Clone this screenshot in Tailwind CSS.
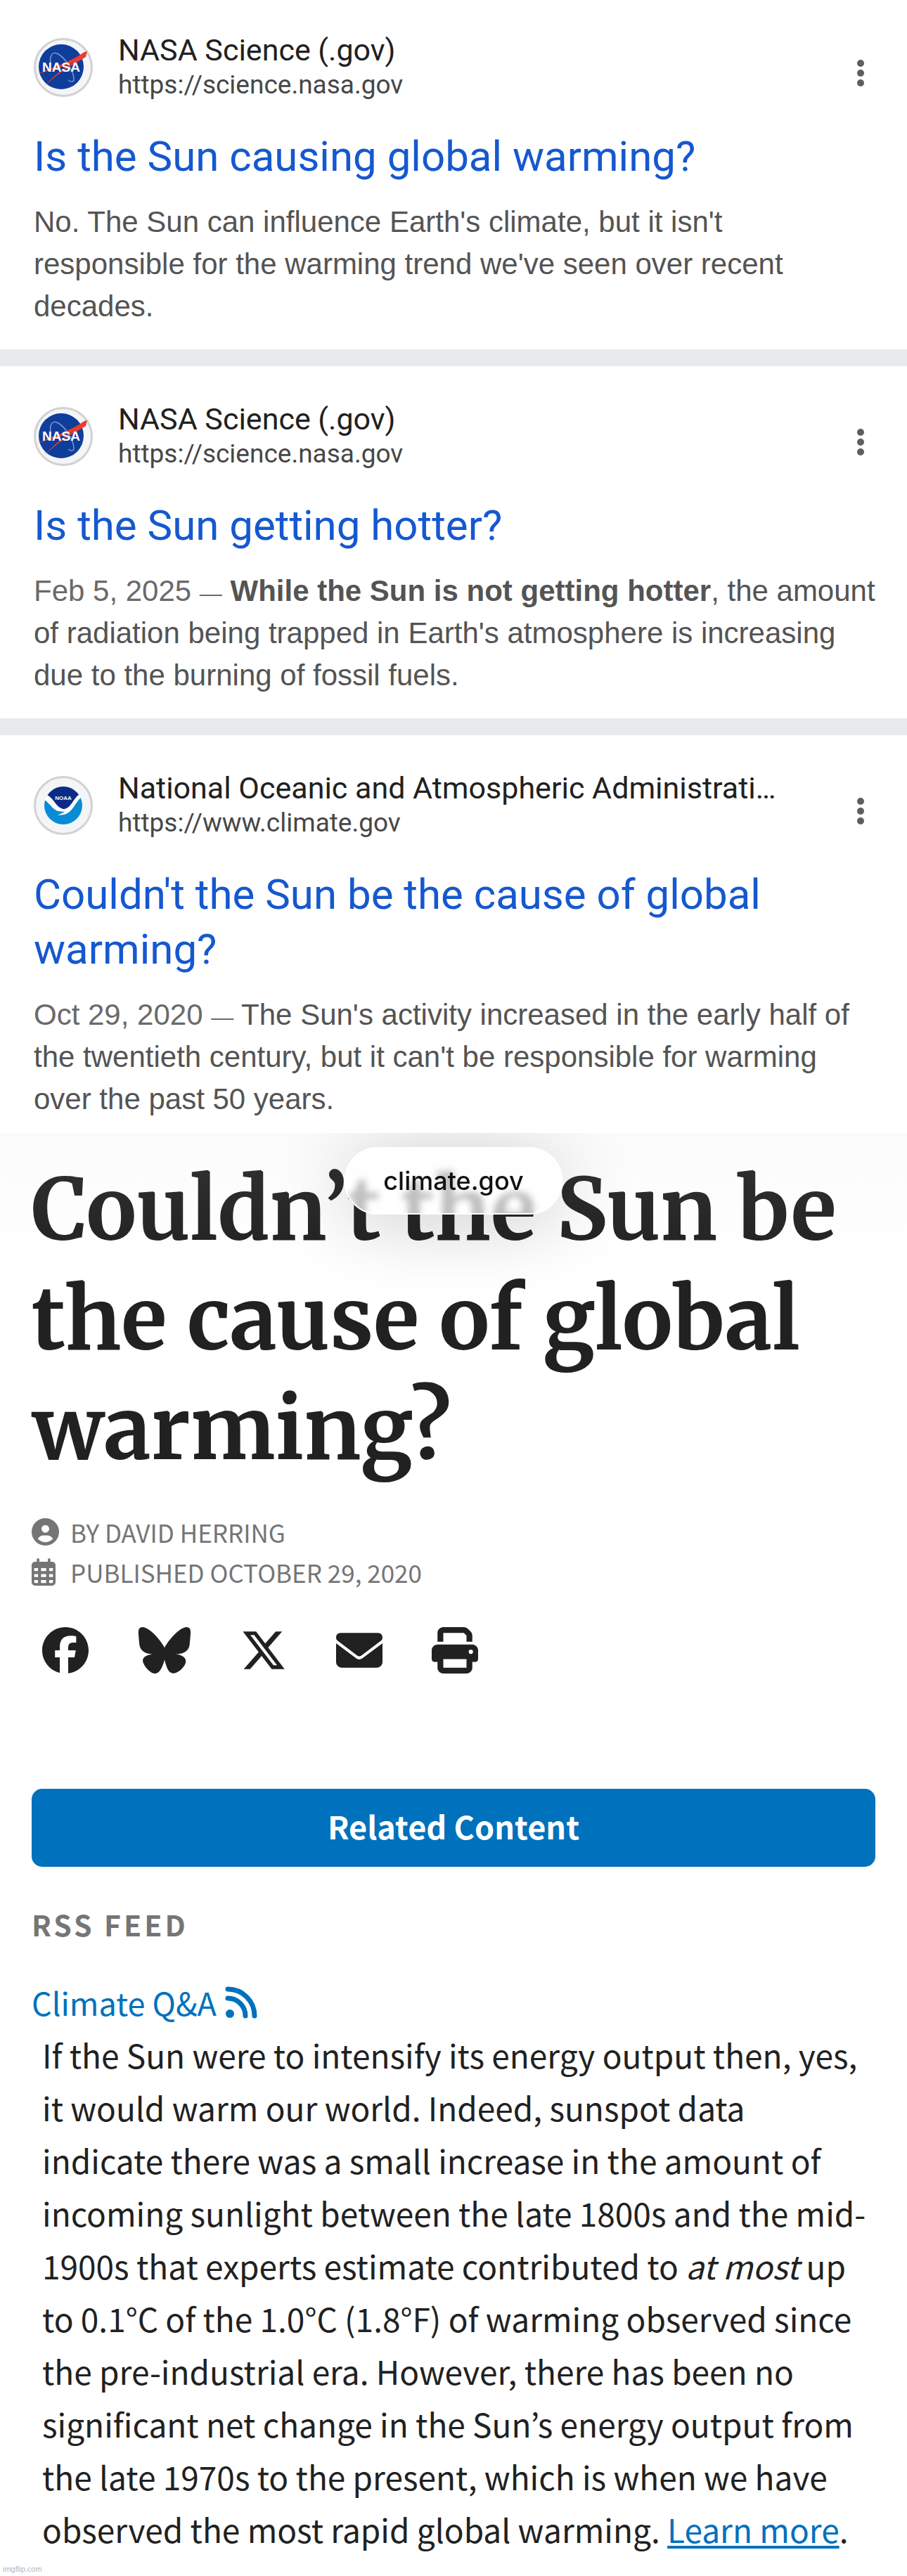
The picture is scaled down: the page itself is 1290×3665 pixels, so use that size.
<!DOCTYPE html>
<html lang="en">
<head>
  <meta charset="UTF-8" />
  <meta name="viewport" content="width=device-width, initial-scale=1.0"/>
  <title>Couldn’t the Sun be the cause of global warming?</title>
  <script src="https://cdn.jsdelivr.net/npm/@tailwindcss/browser@4"></script>
</head>
<body class="relative bg-white font-['Noto_Sans_CJK_JP','Noto_Sans',sans-serif] text-[#212121]">

  <!-- Shared icons -->
  <svg class="hidden" aria-hidden="true">
    <symbol id="nasa" viewBox="0 0 84 84">
      <circle cx="42" cy="42" r="40.5" fill="#f3f5f9" stroke="#d2d2d2" stroke-width="3"/>
      <circle cx="39" cy="41" r="32" fill="#0f3d9b"/>
      <path d="M24 38c-2-14 3-20 11-15 10 6 22 24 22 36 0 4-4 4-8 1" fill="none" stroke="#7d97cf" stroke-width="1.5"/>
      <path d="M4 52C24 42 50 36 72 20l4-1-2 8C56 38 34 50 15 69c14-16 28-26 42-34C40 42 22 46 4 52z" fill="#ee3b2c"/>
      <text x="39" y="48" text-anchor="middle" font-family="Liberation Sans, sans-serif" font-weight="700" font-size="19" fill="#fff">NASA</text>
    </symbol>
    <symbol id="dots" viewBox="0 0 12 40">
      <circle cx="6" cy="6" r="5"/><circle cx="6" cy="20" r="5"/><circle cx="6" cy="34" r="5"/>
    </symbol>
  </svg>

  <!-- Search results -->
  <section class="font-[Roboto,sans-serif]">
    <article class="pl-12 pr-10 pt-[46px] pb-[31px] border-b-[24px] border-[#e8eaed]">
      <div class="flex items-center">
        <svg class="size-[84px] shrink-0"><use href="#nasa"/></svg>
        <div class="ml-9 flex-1 min-w-0">
          <p class="text-[43px] leading-[50px] truncate">NASA Science (.gov)</p>
          <p class="text-[37px] leading-[50px] text-[#474747]">https://science.nasa.gov</p>
        </div>
        <button type="button" aria-label="More options" class="mt-4 ml-[100px] mr-5"><svg class="w-3 h-10 fill-[#5e5e5e]"><use href="#dots"/></svg></button>
      </div>
      <h3 class="mt-[38px] text-[60px] leading-[78px] text-[#1558d0]"><a href="#">Is the Sun causing global warming?</a></h3>
      <p class="mt-6 font-['Liberation_Sans',sans-serif] text-[42px] leading-[60px] text-[#545454]">No. The Sun can influence Earth's climate, but it isn't responsible for the warming trend we've seen over recent decades.</p>
    </article>

    <article class="pl-12 pr-10 pt-[50px] pb-[31px] border-b-[24px] border-[#e8eaed]">
      <div class="flex items-center">
        <svg class="size-[84px] shrink-0"><use href="#nasa"/></svg>
        <div class="ml-9 flex-1 min-w-0">
          <p class="text-[43px] leading-[50px] truncate">NASA Science (.gov)</p>
          <p class="text-[37px] leading-[50px] text-[#474747]">https://science.nasa.gov</p>
        </div>
        <button type="button" aria-label="More options" class="mt-4 ml-[100px] mr-5"><svg class="w-3 h-10 fill-[#5e5e5e]"><use href="#dots"/></svg></button>
      </div>
      <h3 class="mt-[38px] text-[60px] leading-[78px] text-[#1558d0]"><a href="#">Is the Sun getting hotter?</a></h3>
      <p class="mt-6 font-['Liberation_Sans',sans-serif] text-[42px] leading-[60px] text-[#545454]"><span class="text-[#6a6a6a]">Feb 5, 2025 <span class="text-[32px] leading-none">—</span> </span><b>While the Sun is not getting hotter</b>, the amount of radiation being trapped in Earth's atmosphere is increasing due to the burning of fossil fuels.</p>
    </article>

    <article class="pl-12 pr-10 pt-[50px] pb-[18px]">
      <div class="flex items-center">
        <svg class="size-[84px] shrink-0" viewBox="0 0 84 84">
          <clipPath id="seal"><circle cx="42" cy="42" r="27"/></clipPath>
          <circle cx="42" cy="42" r="40.5" fill="#f3f5f7" stroke="#d2d2d2" stroke-width="3"/>
          <g clip-path="url(#seal)">
            <path d="M10 10h64v64H10z" fill="#fff"/>
            <path d="M14 10h56v17l-5-1C56 32 53 46 43 47 32 46 30 33 19 27l-5 0z" fill="#0b2c86"/>
            <path d="M12 33c9 2 13 14 22 17l10 1-10 5 9-1C56 52 58 38 70 28v46H12z" fill="#0a8bd6"/>
          </g>
          <text x="42" y="34" text-anchor="middle" font-family="Liberation Sans, sans-serif" font-weight="700" font-size="8" fill="#fff">NOAA</text>
        </svg>
        <div class="ml-9 flex-1 min-w-0">
          <p class="text-[43px] leading-[50px] truncate">National Oceanic and Atmospheric Administration (.gov)</p>
          <p class="text-[37px] leading-[50px] text-[#474747]">https://www.climate.gov</p>
        </div>
        <button type="button" aria-label="More options" class="mt-4 ml-[100px] mr-5"><svg class="w-3 h-10 fill-[#5e5e5e]"><use href="#dots"/></svg></button>
      </div>
      <h3 class="mt-[38px] text-[60px] leading-[78px] text-[#1558d0]"><a href="#">Couldn't the Sun be the cause of global warming?</a></h3>
      <p class="mt-6 font-['Liberation_Sans',sans-serif] text-[42px] leading-[60px] text-[#545454]"><span class="text-[#6a6a6a]">Oct 29, 2020 <span class="text-[32px] leading-none">—</span> </span>The Sun's activity increased in the early half of the twentieth century, but it can't be responsible for warming over the past 50 years.</p>
    </article>
  </section>

  <!-- Article page -->
  <main class="relative overflow-hidden px-[45px] pt-8 pb-[29px]">
    <h1 class="font-[Merriweather,'Noto_Serif',serif] font-bold text-[120px] leading-[156px]">Couldn’t the Sun be the cause of global warming?</h1>

    <!-- Browser address pill floating over the page -->
    <div class="absolute inset-x-0 top-0 h-48 bg-linear-to-b from-[#d8d8d8]/10 to-transparent"></div>
    <div class="absolute top-5 left-1/2 -translate-x-1/2 rounded-full border-2 border-white bg-white/70 backdrop-blur-[5px] shadow-[0_10px_110px_rgba(0,0,0,0.2)] px-[54px] font-[Inter,sans-serif] font-medium text-[36px] leading-[92px] text-[#111]">climate.gov</div>

    <div class="mt-[39px] text-[35px] leading-[57px] text-[#757575]">
      <p class="flex items-center">
        <svg class="size-[39px] mr-4 fill-current" viewBox="0 0 512 512"><path d="M399 384.2C376.9 345.8 335.4 320 288 320H224c-47.4 0-88.9 25.8-111 64.2c35.2 39.2 86.2 63.8 143 63.8s107.8-24.7 143-63.8zM0 256a256 256 0 1 1 512 0A256 256 0 1 1 0 256zm256 16a72 72 0 1 0 0-144 72 72 0 1 0 0 144z"/></svg>
        BY DAVID HERRING
      </p>
      <p class="flex items-center">
        <svg class="w-[34px] h-[39px] mr-[21px] fill-current" viewBox="0 0 448 512"><path fill-rule="evenodd" d="M120 0c13.300 0 24 10.700 24 24v40h160V24c0-13.300 10.700-24 24-24s24 10.700 24 24v40h32c35.300 0 64 28.700 64 64v320c0 35.300-28.700 64-64 64H64c-35.300 0-64-28.700-64-64V128c0-35.300 28.700-64 64-64h32V24c0-13.300 10.700-24 24-24zM48 184v56h72v-56zm128 0v56h96v-56zm152 0v56h72v-56zM48 296v56h72v-56zm128 0v56h96v-56zm152 0v56h72v-56zM48 408v40c0 8.800 7.200 16 16 16h56v-56zm128 0v56h96v-56zm152 0v56h56c8.800 0 16-7.200 16-16v-40z"/></svg>
        PUBLISHED OCTOBER 29, 2020
      </p>
    </div>

    <!-- Share links -->
    <nav class="mt-[50px] pl-[15px] flex gap-[70px]" aria-label="Share">
      <a href="#" aria-label="Facebook"><svg class="size-[66px] fill-current" viewBox="0 0 512 512"><path d="M512 256C512 114.600 397.400 0 256 0S0 114.600 0 256C0 376 82.700 476.800 194.200 504.500V334.200H141.400V256h52.800V222.300c0-87.100 39.400-127.500 125-127.500c16.200 0 44.200 3.200 55.700 6.400V172c-6-.6-16.500-1-29.600-1c-42 0-58.200 15.900-58.200 57.200V256h83.600l-14.400 78.200H287V510.100C413.800 494.800 512 386.900 512 256h0z"/></svg></a>
      <a href="#" aria-label="Bluesky"><svg class="w-[76px] h-[66px] fill-current" viewBox="0 0 576 512"><path d="M288 227.100C261.900 176.400 190.900 81.900 124.900 35.300 61.600-9.400 37.500-1.700 21.600 5.500 3.300 13.800 0 41.900 0 58.400S9.100 194 15 213.900c19.500 65.700 89.100 87.900 153.200 80.700C74.300 308.600-9.100 342.800 100.300 464.500 220.600 589.100 265.100 437.800 288 361.100c22.900 76.700 49.200 222.500 185.600 103.400 102.400-103.400 28.100-156-65.800-169.900 64.100 7.100 133.600-15.100 153.200-80.700C566.900 194 576 75 576 58.400s-3.300-44.700-21.600-52.900c-15.800-7.100-40-14.900-103.200 29.800C385.100 81.900 314.100 176.400 288 227.100z"/></svg></a>
      <a href="#" aria-label="X"><svg class="size-[66px] fill-current" viewBox="0 0 512 512"><path d="M389.200 48h70.600L305.600 224.200 487 464H345L233.700 318.600 106.500 464H35.800L200.700 275.500 26.800 48H172.400L272.900 180.900 389.200 48zM364.400 421.800h39.100L151.100 88h-42L364.400 421.800z"/></svg></a>
      <a href="#" aria-label="Email"><svg class="size-[66px] fill-current" viewBox="0 0 512 512"><path d="M48 64C21.500 64 0 85.500 0 112c0 17 6 30 16 38l220 166q20 12 40 0l220-166c10-8 16-21 16-38 0-26.500-21.500-48-48-48zM0 178v206c0 35.300 28.700 64 64 64h384c35.300 0 64-28.700 64-64V178L286 347q-30 18-60 0z"/></svg></a>
      <button type="button" aria-label="Print"><svg class="size-[66px] fill-current" viewBox="0 0 512 512"><path d="M128 0C92.700 0 64 28.700 64 64v96h64V64H354.700L384 93.300V160h64V93.300c0-17-6.700-33.300-18.700-45.300L400 18.700C388 6.700 371.700 0 354.700 0H128zM384 352v32 64H128V384 368 352H384zm64 32h32c17.700 0 32-14.300 32-32V256c0-35.300-28.700-64-64-64H64c-35.300 0-64 28.700-64 64v96c0 17.700 14.300 32 32 32H64v64c0 35.300 28.700 64 64 64H384c35.300 0 64-28.700 64-64V384zM432 248a24 24 0 1 1 0 48 24 24 0 1 1 0-48z"/></svg></button>
    </nav>

    <button type="button" class="mt-[164px] block w-full rounded-[15px] bg-[#0071bc] pt-[15px] pb-[21px] text-[45px] leading-[75px] font-bold text-white">Related Content</button>

    <h2 class="mt-[51px] text-[41px] leading-[60px] font-bold tracking-[4px] text-[#757575]">RSS FEED</h2>
    <p class="mt-11 text-[45px] leading-[75px]">
      <a href="#" class="flex items-center text-[#0071bc]">Climate Q&amp;A
        <svg class="size-[46px] ml-3 fill-none stroke-current" viewBox="0 0 46 46" stroke-width="7" stroke-linecap="round"><circle cx="7" cy="39" r="6" fill="currentColor" stroke="none"/><path d="M4 4a38 38 0 0 1 38 38M4 17a25 25 0 0 1 25 25"/></svg>
      </a>
    </p>
    <p class="pl-[15px] pr-2 text-[46px] leading-[75px]">If the Sun were to intensify its energy output then, yes, it would warm our world. Indeed, sunspot data indicate there was a small increase in the amount of incoming sunlight between the late 1800s and the mid-1900s that experts estimate contributed to <em>at most</em> up to 0.1°C of the 1.0°C (1.8°F) of warming observed since the pre-industrial era. However, there has been no significant net change in the Sun’s energy output from the late 1970s to the present, which is when we have observed the most rapid global warming. <a href="#" class="text-[#0071bc] underline decoration-4 underline-offset-4">Learn more</a>.</p>
  </main>

  <footer class="absolute bottom-0 left-1 font-['Liberation_Sans',sans-serif] text-[11px] leading-5 text-[#b5b5b5]">imgflip.com</footer>

</body>
</html>
